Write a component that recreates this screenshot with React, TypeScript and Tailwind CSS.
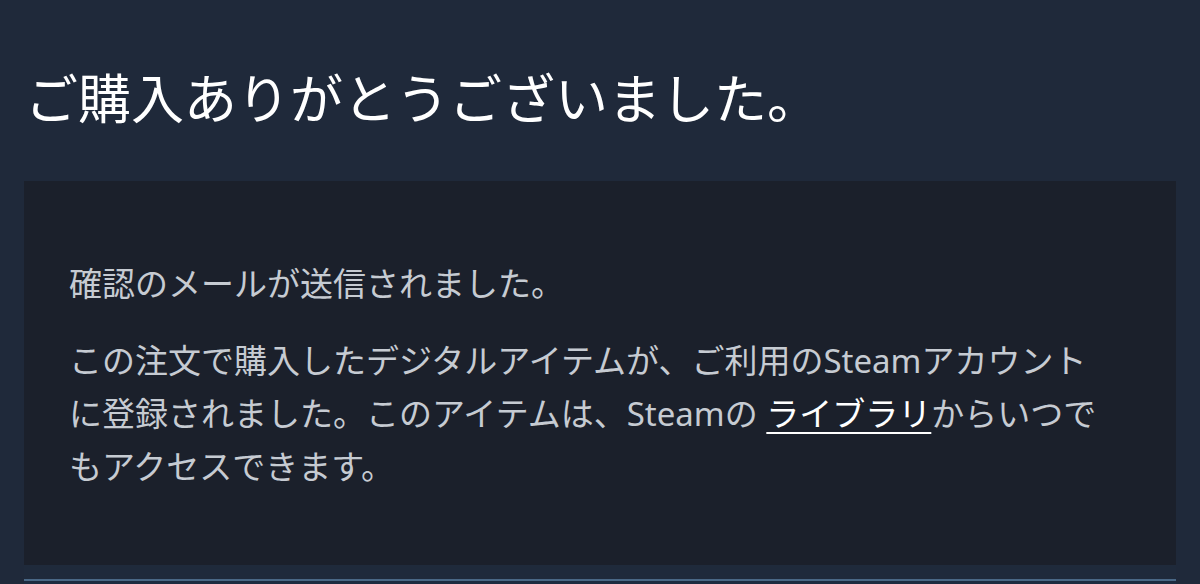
export default function App() {
  return (
    <div
      className="min-h-[584px] bg-[#1f293a] pt-[68px] overflow-hidden"
      style={{ fontFamily: '"Noto Sans", "Noto Sans CJK JP", sans-serif' }}
    >
      <h1 className="px-[25px] text-[53px] leading-[62px] font-normal text-white">
        ご購入ありがとうございました。
      </h1>

      <div className="mx-[24px] mt-[51px]">
        <div className="bg-[#1b202b] pl-[45px] pr-[40px] pt-[76px] pb-[72px] text-[33px] leading-[53px] text-[#c6cbd2]">
          <p>確認のメールが送信されました。</p>
          <p className="mt-[24px]">
            この注文で購入したデジタルアイテムが、ご利用のSteamアカウント
            <br />
            に登録されました。このアイテムは、Steamの{" "}
            <a href="#" className="text-white underline underline-offset-[6px] decoration-2">
              ライブラリ
            </a>
            からいつで
            <br />
            もアクセスできます。
          </p>
        </div>
        <div className="h-[14px] bg-[#1f2a3b]" />
        <div className="h-[20px] border-t-2 border-[#4a6886] bg-[#1d2b40]" />
      </div>
    </div>
  );
}
